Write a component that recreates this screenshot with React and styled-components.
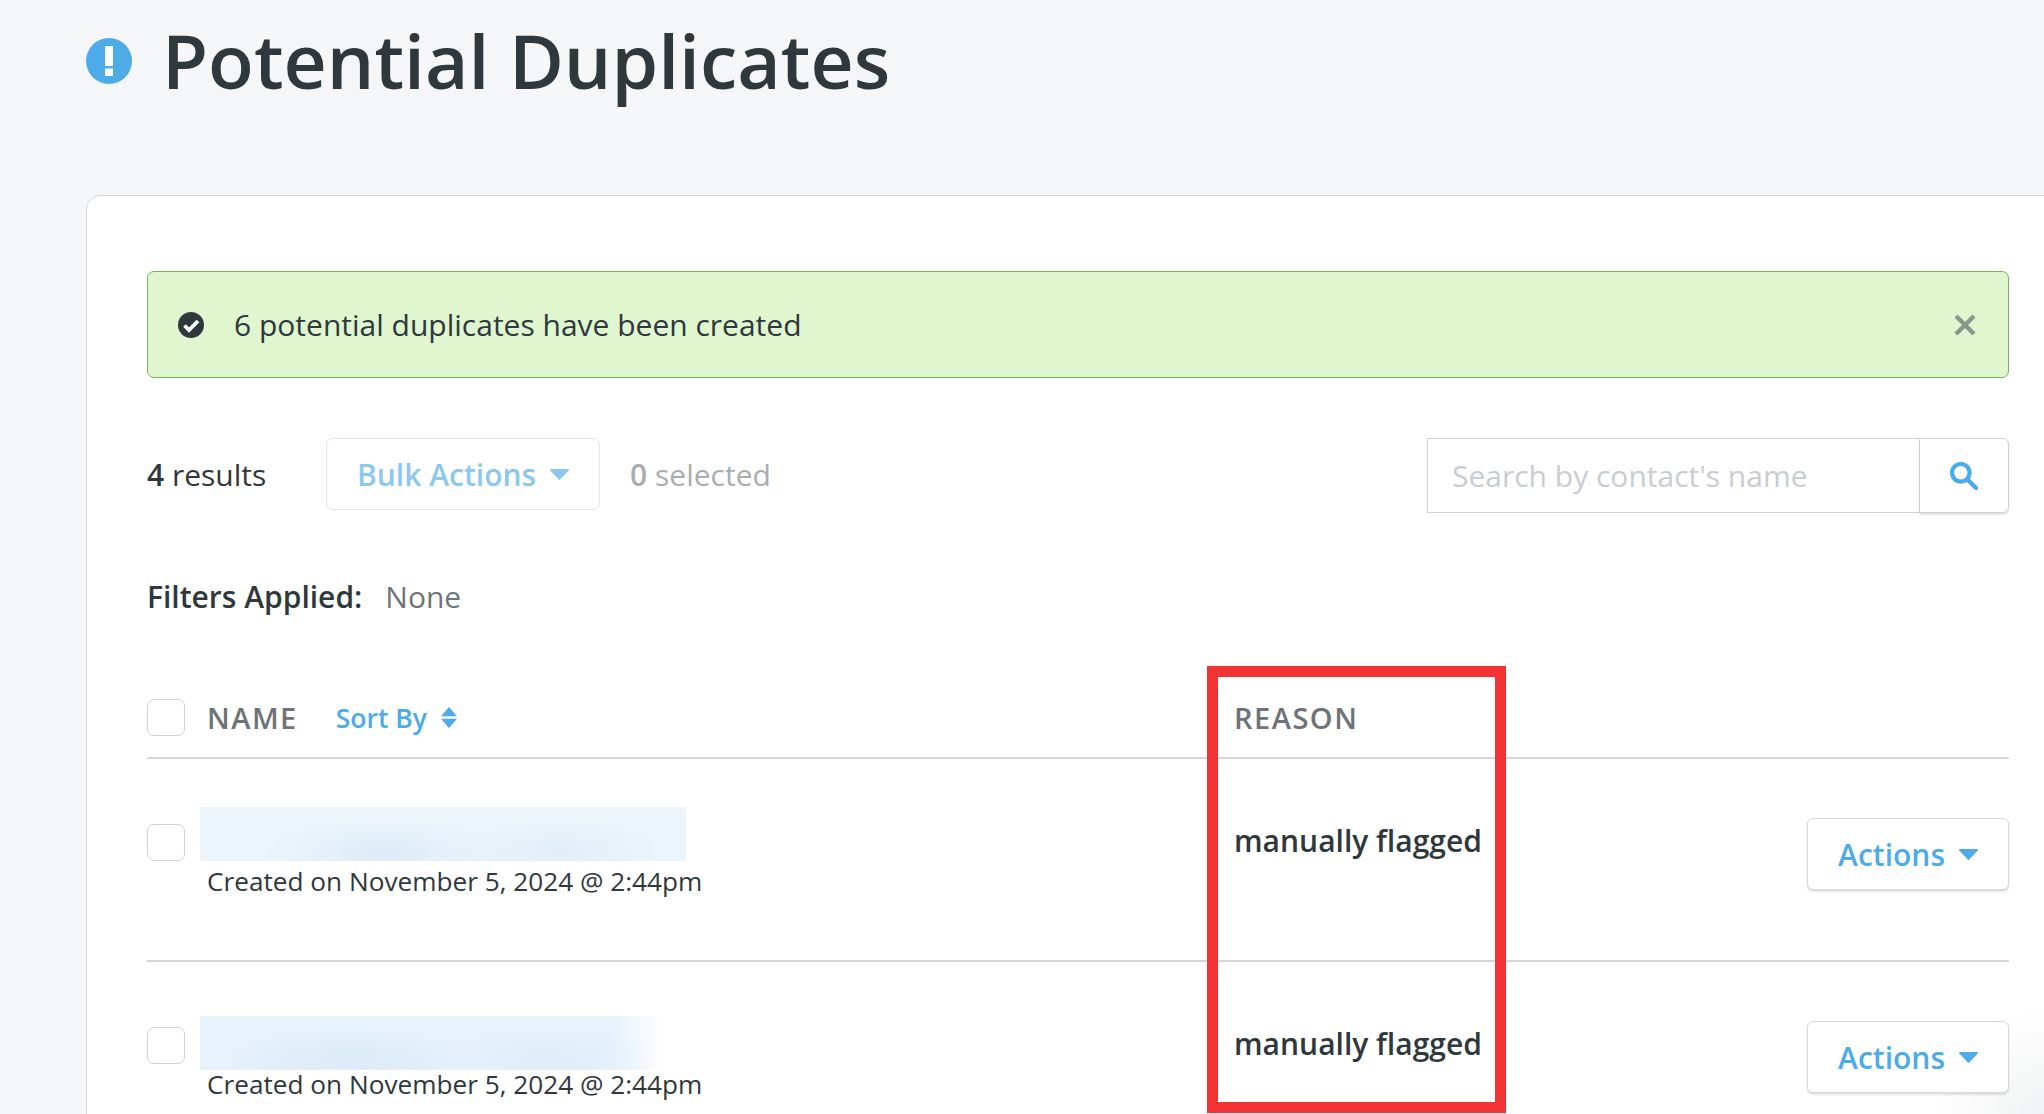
import React from "react";
import styled, { createGlobalStyle } from "styled-components";

const GlobalStyle = createGlobalStyle`
    html, body {
        margin: 0;
        height: 1114px;
        overflow: hidden;
        background: #f4f6f8;
        font-family: "Open Sans", "Noto Sans", sans-serif;
        color: #2f383d;
    }
`;

const Page = styled.div`
    width: 2044px;
    height: 1114px;
    overflow: hidden;
    padding-left: 86px;
    box-sizing: border-box;
`;

const Header = styled.header`
    display: flex;
    align-items: center;
    gap: 30px;
    height: 122px;
    margin-bottom: 73px;
`;

const Title = styled.h1`
    margin: 0 0 3px;
    font-size: 75px;
    font-weight: 600;
    line-height: 118px;
    color: #2f383d;
`;

const Card = styled.main`
    width: 2000px;
    min-height: 1000px;
    box-sizing: border-box;
    padding: 75px 0 0 60px;
    background: radial-gradient(circle 110px at 1958px 918px, #f1f2f3, #fff);
    border: 1px solid #d5d7da;
    border-radius: 14px;
`;

const Content = styled.div`
    width: 1862px;
`;

const Alert = styled.div`
    display: flex;
    align-items: center;
    height: 107px;
    box-sizing: border-box;
    padding: 0 32px 0 30px;
    background: #dff6cf;
    border: 1px solid #74b554;
    border-radius: 7px;
`;

const AlertText = styled.span`
    flex: 1;
    margin-left: 30px;
    font-size: 30px;
`;

const Toolbar = styled.div`
    display: flex;
    align-items: flex-start;
    margin-top: 60px;
    height: 75px;
`;

const Results = styled.span`
    font-size: 30px;
    line-height: 74px;
    width: 179px;
`;

const Count = styled.span`
    font-weight: 600;
`;

const Button = styled.button`
    display: inline-flex;
    align-items: center;
    gap: 14px;
    height: 72px;
    box-sizing: border-box;
    padding: 0 30px;
    font: inherit;
    font-size: 30px;
    font-weight: 600;
    background: #fff;
    border: 1px solid ${(props) => (props.$faded ? "#e2e4e6" : "#d5d7da")};
    border-radius: 6px;
    color: ${(props) => (props.$faded ? "#8cc7ef" : "#4dabe8")};
    box-shadow: ${(props) => (props.$faded ? "none" : "0 2px 2px rgba(0, 0, 0, 0.12)")};
`;

const Caret = styled.svg`
    width: 19px;
    height: 11px;
    fill: currentColor;
`;

const Selected = styled.span`
    margin-left: 30px;
    font-size: 30px;
    line-height: 74px;
    color: #aaadb0;
`;

const Search = styled.div`
    display: flex;
    margin-left: auto;
    height: 75px;
`;

const SearchInput = styled.input`
    width: 492px;
    box-sizing: border-box;
    padding: 0 24px;
    font: inherit;
    font-size: 30px;
    border: 1px solid #cfd1d4;
    border-right: none;
    outline: none;
    &::placeholder {
        color: #c9ccd0;
    }
`;

const SearchButton = styled.button`
    width: 90px;
    display: flex;
    align-items: center;
    justify-content: center;
    padding: 0;
    background: #fff;
    border: 1px solid #cfd1d4;
    border-radius: 0 6px 6px 0;
    box-shadow: 0 2px 2px rgba(0, 0, 0, 0.12);
    color: #4dabe8;
`;

const Filters = styled.div`
    display: flex;
    align-items: center;
    gap: 23px;
    margin-top: 63px;
    font-size: 30px;
`;

const FilterLabel = styled.span`
    font-weight: 600;
`;

const FilterValue = styled.span`
    color: #6f7478;
`;

const Table = styled.div`
    position: relative;
    margin-top: 49px;
`;

const Highlight = styled.div`
    position: absolute;
    left: 1060px;
    top: 0;
    width: 299px;
    height: 447px;
    box-sizing: border-box;
    border: 11px solid #f23333;
    pointer-events: none;
`;

const HeadRow = styled.div`
    display: grid;
    grid-template-columns: 1087px 1fr;
    align-items: center;
    height: 93px;
    padding-top: 12px;
    border-bottom: 2px solid #d5d7da;
    box-sizing: border-box;
`;

const NameHead = styled.div`
    display: flex;
    align-items: center;
`;

const Check = styled.span`
    flex: none;
    display: block;
    width: 38px;
    height: 37px;
    box-sizing: border-box;
    background: #fff;
    border: 1px solid #cfd1d4;
    border-radius: 7px;
`;

const ColumnTitle = styled.span`
    font-size: 29px;
    font-weight: 600;
    letter-spacing: 1.5px;
    color: #6d7377;
`;

const NameTitle = styled(ColumnTitle)`
    margin-left: 22px;
`;

const SortBy = styled.span`
    display: flex;
    align-items: center;
    gap: 14px;
    margin-left: 38px;
    font-size: 26.5px;
    font-weight: 600;
    color: #4dabe8;
`;

const Row = styled.div`
    display: grid;
    grid-template-columns: 1087px 1fr auto;
    height: 203px;
    box-sizing: border-box;
    border-bottom: 2px solid #d5d7da;
`;

const NameCell = styled.div`
    display: flex;
    align-items: flex-start;
    padding-top: 48px;
`;

const CheckSlot = styled.div`
    padding-top: 17px;
`;

const NameBlock = styled.div`
    margin-left: 15px;
`;

const RedactedSlot = styled.div`
    display: flow-root;
    height: 56px;
`;

const Redacted = styled.div`
    width: ${(props) => props.$width}px;
    height: 54px;
    margin-top: ${(props) => props.$offset}px;
    background:
        radial-gradient(ellipse 130px 36px at ${(props) => props.$spot}% 85%, #dcebf8, transparent),
        radial-gradient(ellipse 110px 34px at 74% 80%, #e0edf9, transparent),
        ${(props) => props.$fill};
`;

const Created = styled.div`
    position: relative;
    margin-left: 7px;
    font-size: 26.2px;
    line-height: 36px;
`;

const Reason = styled.div`
    padding-top: 61px;
    font-size: 30px;
    font-weight: 600;
`;

const ActionCell = styled.div`
    padding-top: 59px;
`;

function CaretDown() {
    return (
        <Caret viewBox="0 0 19 11">
            <path d="M1 0h17c.9 0 1.3 1 .7 1.6L10.2 10.6c-.4.4-1 .4-1.4 0L.3 1.6C-.3 1 .1 0 1 0z" />
        </Caret>
    );
}

function ContactRow({ width, fill, spot, offset }) {
    return (
        <Row>
            <NameCell>
                <CheckSlot>
                    <Check />
                </CheckSlot>
                <NameBlock>
                    <RedactedSlot>
                        <Redacted $width={width} $fill={fill} $spot={spot} $offset={offset} />
                    </RedactedSlot>
                    <Created>Created on November 5, 2024 @ 2:44pm</Created>
                </NameBlock>
            </NameCell>
            <Reason>manually flagged</Reason>
            <ActionCell>
                <Button>
                    Actions
                    <CaretDown />
                </Button>
            </ActionCell>
        </Row>
    );
}

export default function App() {
    return (
        <Page>
            <GlobalStyle />
            <Header>
                <svg width="46" height="46" viewBox="0 0 46 46">
                    <circle cx="23" cy="23" r="23" fill="#4dabe8" />
                    <rect x="19" y="8" width="8" height="20" fill="#fff" />
                    <rect x="19" y="30.5" width="8" height="7.5" fill="#fff" />
                </svg>
                <Title>Potential Duplicates</Title>
            </Header>
            <Card>
                <Content>
                    <Alert>
                        <svg width="26" height="26" viewBox="0 0 26 26">
                            <circle cx="13" cy="13" r="13" fill="#2f383d" />
                            <path d="M6.5 13.5l4.5 4.5 9-9" fill="none" stroke="#fff" strokeWidth="3.8" />
                        </svg>
                        <AlertText>6 potential duplicates have been created</AlertText>
                        <svg width="22" height="22" viewBox="0 0 22 22">
                            <path d="M2 2l18 18M20 2L2 20" stroke="#87998a" strokeWidth="4.4" />
                        </svg>
                    </Alert>
                    <Toolbar>
                        <Results>
                            <Count>4</Count> results
                        </Results>
                        <Button $faded>
                            Bulk Actions
                            <CaretDown />
                        </Button>
                        <Selected>
                            <Count>0</Count> selected
                        </Selected>
                        <Search>
                            <SearchInput placeholder="Search by contact's name" readOnly />
                            <SearchButton>
                                <svg width="28" height="28" viewBox="0 0 28 28">
                                    <circle cx="10.8" cy="10.8" r="8.8" fill="none" stroke="currentColor" strokeWidth="4.2" />
                                    <path d="M17.5 17.5l8.5 8.5" stroke="currentColor" strokeWidth="4.4" strokeLinecap="round" />
                                </svg>
                            </SearchButton>
                        </Search>
                    </Toolbar>
                    <Filters>
                        <FilterLabel>Filters Applied:</FilterLabel>
                        <FilterValue>None</FilterValue>
                    </Filters>
                    <Table>
                        <HeadRow>
                            <NameHead>
                                <Check />
                                <NameTitle>NAME</NameTitle>
                                <SortBy>
                                    Sort By
                                    <svg width="16" height="21" viewBox="0 0 16 21" fill="currentColor">
                                        <path d="M8 0l8 9.2H0zM0 11.8h16L8 21z" />
                                    </svg>
                                </SortBy>
                            </NameHead>
                            <ColumnTitle>REASON</ColumnTitle>
                        </HeadRow>
                        <ContactRow width={486} fill="#edf5fc" spot={38} offset={0} />
                        <ContactRow width={466} fill="linear-gradient(90deg, #e6f1fb 88%, #fff 100%)" spot={32} offset={6} />
                        <Highlight />
                    </Table>
                </Content>
            </Card>
        </Page>
    );
}
